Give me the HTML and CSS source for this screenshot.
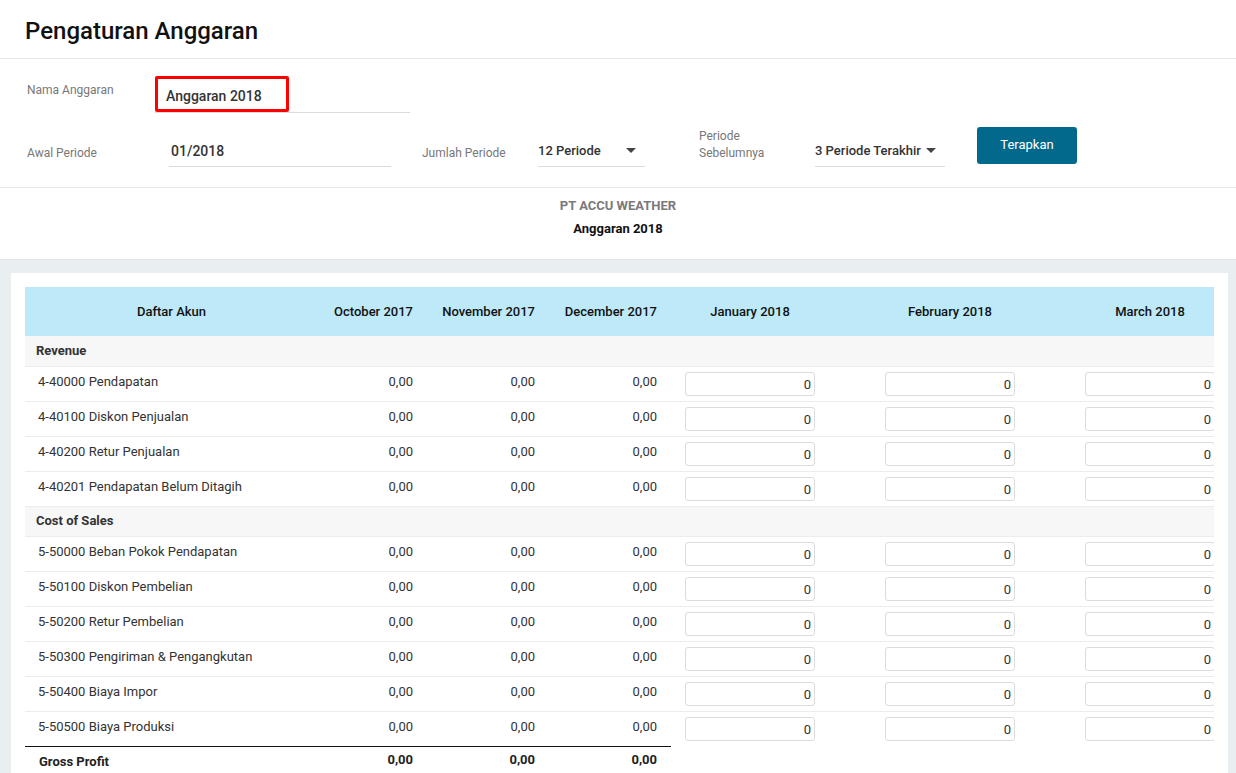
FILE: index.html
```html
<!DOCTYPE html>
<html lang="id">
<head>
<meta charset="utf-8">
<title>Pengaturan Anggaran</title>
<link rel="stylesheet" href="styles.css">
</head>
<body>
<div class="app">
  <header class="page-head">
    <h1 class="page-title">Pengaturan Anggaran</h1>
  </header>

  <section class="form">
    <div class="form-row row-name">
      <label class="lbl lbl-name">Nama Anggaran</label>
      <div class="field field-name">
        <span class="field-text">Anggaran 2018</span>
        <span class="highlight"></span>
      </div>
    </div>
    <div class="form-row row-period">
      <label class="lbl lbl-start">Awal Periode</label>
      <div class="field field-start"><span class="field-text">01/2018</span></div>
      <label class="lbl lbl-count">Jumlah Periode</label>
      <div class="field select select-count"><span class="field-text">12 Periode</span><span class="caret"></span></div>
      <label class="lbl lbl-prev">Periode<br>Sebelumnya</label>
      <div class="field select select-prev"><span class="field-text">3 Periode Terakhir</span><span class="caret"></span></div>
      <button class="btn-apply" type="button">Terapkan</button>
    </div>
  </section>

  <section class="company">
    <div class="company-name">PT ACCU WEATHER</div>
    <div class="budget-name">Anggaran 2018</div>
  </section>

  <main class="table-area">
    <div class="card">
      <div class="table-wrap">
        <table class="budget">
          <colgroup>
            <col class="c-acc"><col class="c-past"><col class="c-past"><col class="c-past">
            <col class="c-month"><col class="c-month"><col class="c-month">
          </colgroup>
          <thead>
            <tr>
              <th class="th-acc">Daftar Akun</th>
              <th class="th-past">October 2017</th>
              <th class="th-past">November 2017</th>
              <th class="th-past">December 2017</th>
              <th class="th-month">January 2018</th>
              <th class="th-month">February 2018</th>
              <th class="th-month">March 2018</th>
            </tr>
          </thead>
          <tbody>
            <tr class="group"><td colspan="7">Revenue</td></tr>
            <tr class="item"><td class="acc">4-40000 Pendapatan</td><td class="num">0,00</td><td class="num">0,00</td><td class="num">0,00</td><td class="inp"><input value="0"></td><td class="inp"><input value="0"></td><td class="inp"><input value="0"></td></tr>
            <tr class="item"><td class="acc">4-40100 Diskon Penjualan</td><td class="num">0,00</td><td class="num">0,00</td><td class="num">0,00</td><td class="inp"><input value="0"></td><td class="inp"><input value="0"></td><td class="inp"><input value="0"></td></tr>
            <tr class="item"><td class="acc">4-40200 Retur Penjualan</td><td class="num">0,00</td><td class="num">0,00</td><td class="num">0,00</td><td class="inp"><input value="0"></td><td class="inp"><input value="0"></td><td class="inp"><input value="0"></td></tr>
            <tr class="item"><td class="acc">4-40201 Pendapatan Belum Ditagih</td><td class="num">0,00</td><td class="num">0,00</td><td class="num">0,00</td><td class="inp"><input value="0"></td><td class="inp"><input value="0"></td><td class="inp"><input value="0"></td></tr>
            <tr class="group"><td colspan="7">Cost of Sales</td></tr>
            <tr class="item"><td class="acc">5-50000 Beban Pokok Pendapatan</td><td class="num">0,00</td><td class="num">0,00</td><td class="num">0,00</td><td class="inp"><input value="0"></td><td class="inp"><input value="0"></td><td class="inp"><input value="0"></td></tr>
            <tr class="item"><td class="acc">5-50100 Diskon Pembelian</td><td class="num">0,00</td><td class="num">0,00</td><td class="num">0,00</td><td class="inp"><input value="0"></td><td class="inp"><input value="0"></td><td class="inp"><input value="0"></td></tr>
            <tr class="item"><td class="acc">5-50200 Retur Pembelian</td><td class="num">0,00</td><td class="num">0,00</td><td class="num">0,00</td><td class="inp"><input value="0"></td><td class="inp"><input value="0"></td><td class="inp"><input value="0"></td></tr>
            <tr class="item"><td class="acc">5-50300 Pengiriman &amp; Pengangkutan</td><td class="num">0,00</td><td class="num">0,00</td><td class="num">0,00</td><td class="inp"><input value="0"></td><td class="inp"><input value="0"></td><td class="inp"><input value="0"></td></tr>
            <tr class="item"><td class="acc">5-50400 Biaya Impor</td><td class="num">0,00</td><td class="num">0,00</td><td class="num">0,00</td><td class="inp"><input value="0"></td><td class="inp"><input value="0"></td><td class="inp"><input value="0"></td></tr>
            <tr class="item last"><td class="acc">5-50500 Biaya Produksi</td><td class="num">0,00</td><td class="num">0,00</td><td class="num">0,00</td><td class="inp"><input value="0"></td><td class="inp"><input value="0"></td><td class="inp"><input value="0"></td></tr>
            <tr class="total"><td class="acc tot">Gross Profit</td><td class="num tot">0,00</td><td class="num tot">0,00</td><td class="num tot">0,00</td><td class="blank"></td><td class="blank"></td><td class="blank"></td></tr>
          </tbody>
        </table>
      </div>
    </div>
  </main>
</div>
</body>
</html>
```

FILE: styles.css
```css
* { box-sizing: border-box; }
html, body { margin: 0; padding: 0; }
body {
  font-family: Roboto, "Liberation Sans", Arial, sans-serif;
  color: #333;
  background: #fff;
}
.app {
  height: 100vh;
  display: flex;
  flex-direction: column;
  overflow: hidden;
}

/* Header */
.page-head {
  height: 59px;
  flex: none;
  display: flex;
  align-items: center;
  padding-left: 25px;
  border-bottom: 1px solid #e6e6e6;
}
.page-title {
  margin: 0;
  font-size: 24px;
  font-weight: 500;
  color: #111;
  padding-top: 3px;
}

/* Form */
.form {
  flex: none;
  padding: 17px 0 20px 27px;
  border-bottom: 1px solid #e8e8e8;
}
.form-row { display: flex; }
.row-name { height: 37px; align-items: flex-start; }
.row-period { height: 40px; margin-top: 14px; align-items: flex-end; }

.lbl {
  font-size: 12px;
  line-height: 17px;
  color: #777;
  flex: none;
}
.lbl-name { width: 128px; padding-top: 6px; }
.lbl-start { width: 142px; margin-bottom: 5px; }
.lbl-count { width: 116px; margin-left: 31px; margin-bottom: 5px; }
.lbl-prev { width: 116px; margin-left: 54px; margin-bottom: 5px; }

.field {
  position: relative;
  flex: none;
  border-bottom: 1px solid #d6dcdf;
  display: flex;
  align-items: flex-end;
}
.field-text {
  font-size: 14px;
  font-weight: 500;
  color: #333;
  line-height: 20px;
}
.field-name { width: 255px; height: 37px; padding: 0 0 6px 11px; }
.field-start { width: 222px; height: 28px; padding: 0 0 5px 2px; }
.select { height: 28px; padding: 0 0 5px 0; justify-content: space-between; }
.select .field-text { font-size: 13px; }
.select-count { width: 107px; }
.select-prev { width: 130px; }
.caret {
  width: 0; height: 0;
  border-left: 5px solid transparent;
  border-right: 5px solid transparent;
  border-top: 5px solid #444;
  margin: 0 9px 8px 0;
}
.highlight {
  position: absolute;
  left: 0; top: 0;
  width: 134px; height: 36px;
  border: 3px solid #f00;
  border-radius: 2px;
}
.btn-apply {
  flex: none;
  margin-left: 32px;
  margin-bottom: 3px;
  width: 100px;
  height: 37px;
  border: none;
  border-radius: 3px;
  background: #02698d;
  color: #fff;
  font-family: Roboto, "Liberation Sans", Arial, sans-serif;
  font-size: 13px;
  padding: 0 0 3px;
}

/* Company */
.company {
  flex: none;
  height: 72px;
  text-align: center;
  border-bottom: 1px solid #e6e6e6;
  padding-top: 10px;
}
.company-name {
  font-size: 13px;
  font-weight: 700;
  color: #7a7a7a;
  line-height: 16px;
}
.budget-name {
  font-size: 13px;
  font-weight: 700;
  color: #111;
  line-height: 16px;
  margin-top: 7px;
}

/* Table area */
.table-area {
  flex: 1;
  min-height: 0;
  background: #e9eff0;
  padding: 13px 8px 0 11px;
  overflow: hidden;
}
.card {
  background: #fff;
  padding: 14px 14px 0;
  height: 100%;
}
.table-wrap {
  overflow: hidden;
  width: 100%;
}
.budget {
  border-collapse: collapse;
  table-layout: fixed;
  width: 1246px;
  font-size: 13px;
}
.c-acc { width: 280px; }
.c-past { width: 122px; }
.c-month { width: 200px; }

.budget thead tr { background: #bde9f9; height: 49px; }
.budget th {
  font-weight: 500;
  color: #111;
  font-size: 13px;
  padding: 0;
}
.th-acc { text-align: center; padding-left: 13px !important; }
.th-past { text-align: right; padding-right: 14px !important; }
.th-month { text-align: center; padding: 0 56px 0 14px !important; }

.group td {
  background: #f7f7f7;
  height: 30px;
  font-weight: 700;
  color: #333;
  padding: 0 0 1px 11px;
  border-bottom: 1px solid #ececec;
}
.item td {
  height: 35px;
  border-bottom: 1px solid #ececec;
  padding: 0;
}
.item td.acc { padding: 0 0 4px 13px; color: #333; }
.num { text-align: right; padding: 0 14px 4px 0 !important; color: #333; }
.inp { padding: 0 56px 0 14px !important; }
.inp input {
  display: block;
  width: 130px;
  height: 24px;
  border: 1px solid #dcdcdc;
  border-radius: 3px;
  text-align: right;
  padding: 0 3px 0 4px;
  font-family: Roboto, "Liberation Sans", Arial, sans-serif;
  font-size: 13px;
  color: #333;
  background: #fff;
  margin-top: 1px;
}
.item.last td { border-bottom: none; }
.item.last td.acc, .item.last td.num { border-bottom: 1px solid #111; }
.total td { height: 30px; padding: 0; }
.total td.tot { font-weight: 700; color: #222; }
.total td.acc { padding-left: 14px; }
```
